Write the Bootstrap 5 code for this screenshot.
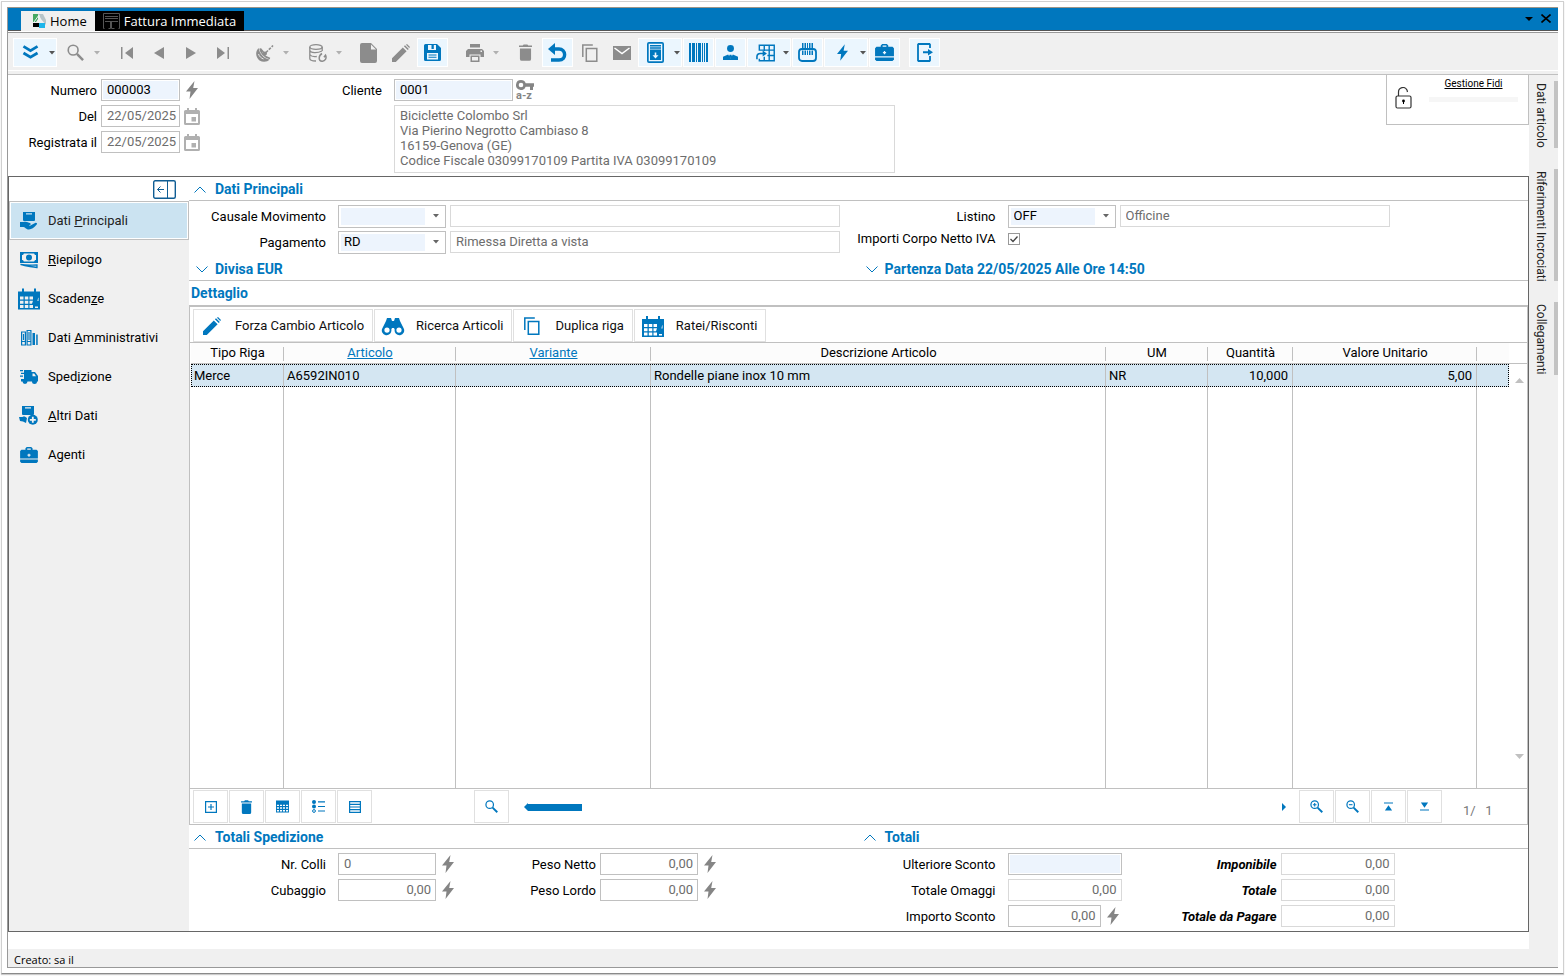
<!DOCTYPE html>
<html lang="it">
<head>
<meta charset="utf-8">
<meta name="viewport" content="width=device-width, initial-scale=1">
<title>Fattura Immediata</title>
<link href="https://cdn.jsdelivr.net/npm/bootstrap@5.3.0/dist/css/bootstrap.min.css" rel="stylesheet">
<style>
:root{--blue:#0077be;--line:#c0c0c0;--soft:#d9d9d9;--face:#f0f0f0;--fill:#edf4fd;--mute:#6d6d6d;--icon:#8c8c8c}
body{font:13px/15px Roboto,"Liberation Sans",sans-serif;color:#000;background:#fff}
button{font:inherit;color:inherit;background:none;border:0;padding:0}
svg{display:block;flex:none;fill:currentColor}
.ln{fill:none;stroke:currentColor}
.shell{margin:1px 1px 2px;border:1px solid #d0d0d0;border-bottom-color:#8a8a8a;padding:5px;box-shadow:0 1px 1px #ccc}
.win{border-left:1px solid #999;border-bottom:1px solid #999}
/* title bar */
.titlebar{height:24px;background:var(--blue);border-top:1px solid #9c9588;border-bottom:1px solid #555;padding:3px 7px 0 13px;font:13px/19px "Open Sans","Noto Sans",sans-serif}
.doc-tab{height:20px;padding:0 8px;background:var(--face);color:#000}
.doc-tab.on{background:#000;color:#fff}
/* toolbar */
.toolstrip{background:var(--face);border-top:1px solid #999;margin-top:1px;height:43px;padding:5px 5px 0;gap:1px;border-bottom:1px solid var(--line);box-shadow:inset 0 -3px var(--face),inset 0 -4px #fff}
.tb{width:31px;height:29px;border:1px solid transparent;display:flex;align-items:center;justify-content:center;color:var(--icon)}
.tb.dd{width:44px;justify-content:space-between;padding:0 1px 0 8px}
.tb.live{background:#ebf6fe;border-color:#fff;color:var(--blue)}
.tb.live .caret{color:#555}
.caret{color:#b0b0b0}
.gapl{margin-left:8px}
/* fields */
.fld{height:22px;border:1px solid var(--line);border-radius:0;padding:0 0 1px 5px;font:inherit;line-height:15px;color:var(--mute);background:#fff;min-width:0}
.fld.pale{border-color:var(--soft)}
.fld.ed{background:var(--fill);box-shadow:inset 0 0 0 1px #fff;color:#000}
.fld.num{text-align:right;padding-right:4px}
.combo{width:108px;height:23px;appearance:none;color:#000;
 background:url("data:image/svg+xml,%3Csvg xmlns='http://www.w3.org/2000/svg' width='6' height='4'%3E%3Cpath d='M0 0h6L3 3.500z' fill='%23666'/%3E%3C/svg%3E") right 6px center no-repeat,linear-gradient(var(--fill),var(--fill)) 2px 2px/calc(100% - 22px) calc(100% - 4px) no-repeat,#fff}
.rowf{display:flex;align-items:center;height:22px}
.stack{display:flex;flex-direction:column;gap:4px}
.lb{text-align:right;flex:none;white-space:nowrap}
.w-date{width:79px}.w-cod{width:119px}.w-qty{width:98px}.w-tot{width:114px}.w-sco{width:93px}
.la{width:89px;margin-right:4px}
.lm{width:137px;margin-right:12px}
.ls{width:140px;margin-right:4px}
.w-desc{width:390px}.w-lis{width:270px}
.bolt{color:#858585}
.addr{width:501px;height:68px;border:1px solid var(--soft);padding:2px 5px;color:var(--mute);resize:none;font:inherit;overflow:hidden;display:block}
.head-form{height:101px;padding-top:4px}
.fidi{width:143px;height:51px;border:1px solid var(--line);margin-top:-5px;padding:0 10px 0 8px}
.fidi a{font-size:10px;line-height:12px;color:#000}
.fidi .meter{height:5px;width:89px;background:#f6f6f6;margin-top:7px}
/* main panel */
.panel{border:1px solid #666;min-height:0}
.sidebar{width:180px;background:var(--face);flex:none}
.side-top{height:24px;background:#fff;padding-right:13px}
.side-link{display:flex;align-items:center;height:39px;padding:0 0 0 8px;color:#000;text-decoration:none;border:1px solid transparent;gap:8px}
.side-link svg{color:var(--blue);width:22px;height:22px}
.side-link.on{background:#cbe3f1;border-color:var(--line);box-shadow:inset 0 0 0 1px #fff;color:#222}
.sec{height:24px;border-bottom:1px solid var(--line);font-weight:700;font-size:14px;color:var(--blue);display:flex;align-items:center;gap:9px;padding:1px 0 0 5px}
.sec.low{padding-left:7px;gap:7px}
.sec.plain{padding-left:2px;height:26px;border-bottom-width:2px}
.half{width:50%}
.ckb{appearance:none;width:12px;height:12px;border:1px solid #999;margin:0 0 0 12px;background:#fff url("data:image/svg+xml,%3Csvg xmlns='http://www.w3.org/2000/svg' viewBox='0 0 10 10'%3E%3Cpath d='M1.500 5l2.500 2.500 4.500-5' fill='none' stroke='%23444' stroke-width='1.300'/%3E%3C/svg%3E")}
.detail{border-left:1px solid var(--line);border-right:1px solid var(--line);min-height:0}
.acts{height:36px;padding:2px 3px 0;gap:1px;border-bottom:1px solid var(--line)}
.act{height:33px;border:1px solid #e0e0e0;display:flex;align-items:center;padding:0 8px 0 6px;color:#111}
.act svg{color:var(--blue);width:24px;height:24px;margin-right:11px}
.grd{table-layout:fixed;width:100%;height:100%;border-collapse:separate;border-spacing:0}
.grd th{height:21px;font-weight:400;text-align:center;padding:0 0 2px;border-bottom:1px solid var(--line);background:linear-gradient(var(--line),var(--line)) right 4px/1px 14px no-repeat,#fcfcfc}
.grd th:last-child{background:#fcfcfc}
.grd a,.lnk{color:var(--blue)}
.grd td{padding:0 4px 0 3px;border-right:1px solid var(--line);white-space:nowrap}
.grd td:last-child{border-right:0}
.grd .sel td{height:23px;background:#d4e6f2}
.grd .sel{outline:1px dotted #000;outline-offset:-1px}
.grd .end{text-align:right}
.vscroll{width:18px;flex:none;color:#c0c0c0;padding:35px 3px 29px 0;background:linear-gradient(var(--line),var(--line)) 0 20px/100% 1px no-repeat}
.foot{height:37px;border-top:1px solid var(--line);border-bottom:1px solid var(--line);padding:1px 0 0 3px;gap:1px}
.fb{width:35px;height:33px;border:1px solid #e0e0e0;display:flex;align-items:center;justify-content:center;color:var(--blue)}
.fb.find{margin-left:101px}
.slide{padding:0 12px 0 14px}
.thumb{width:54px;height:7px;background:var(--blue)}
.pager{color:#777;width:84px;flex:none;padding:7px 0 0 20px;white-space:pre}
.totals{height:82px;padding-top:4px}
.tot{font-weight:700;font-style:italic}
.tot .lb{width:136px}
/* right rail */
.rail{width:29px;background:var(--face);padding-top:6px;gap:21px;flex:none}
.rtab{writing-mode:vertical-rl;font-size:12px;line-height:15px;color:#222;border-right:4px solid #c3c3c3;padding:2px 6px 0 0;width:25px;text-align:left;margin-left:4px;white-space:nowrap}
.base{height:17px;background:#fff}
.status{height:18px;background:var(--face);font:11px/21px "Open Sans","Noto Sans",sans-serif;padding-left:6px}
</style>
</head>
<body class="vh-100 d-flex flex-column overflow-hidden">
<svg width="0" height="0" class="position-absolute" aria-hidden="true">
<symbol id="bolt" viewBox="0 0 12 18"><path d="M8.500 0 0 10.500h4.500L3.500 18 12 7H7.200z"/></symbol>
<symbol id="caret" viewBox="0 0 6 4"><path d="M0 0h6L3 3.500z"/></symbol>
<symbol id="lens" viewBox="0 0 18 18"><circle class="ln" cx="6.500" cy="6.500" r="5.200" stroke-width="1.700"/><path class="ln" d="m10.500 10.500 6.500 6.500" stroke-width="2.600"/></symbol>
<symbol id="pencil" viewBox="0 0 18 18"><path d="M0 18v-3.800L10.800 3.400l3.800 3.800L3.800 18zM11.900 2.300l1.100-1.100 3.800 3.800-1.100 1.100zM14 .8 15 0l3 3-.8 1z"/></symbol>
<symbol id="bin" viewBox="0 0 14 18"><path d="M0 1.500h4L5 .3h4l1 1.200h4v1.700H0zM1 4.600h12V16a2 2 0 0 1-2 2H3a2 2 0 0 1-2-2z"/></symbol>
<symbol id="copy" viewBox="0 0 18 18"><path class="ln" d="M1.800 13V1h10M5.300 4.500h10.500v12.700H5.300z" stroke-width="1.500"/></symbol>
<symbol id="cal" viewBox="0 0 16 17"><path fill-rule="evenodd" d="M3 0h2v2h6V0h2v2h1.500A1.500 1.500 0 0 1 16 3.500v12a1.500 1.500 0 0 1-1.500 1.500h-13A1.500 1.500 0 0 1 0 15.500v-12A1.500 1.500 0 0 1 1.500 2H3zM2 6v9h12V6zM7.500 9h4.500v4.500H7.500z"/></symbol>
<symbol id="case" viewBox="0 0 20 18"><path fill-rule="evenodd" d="M6 3V1.500L7.500 0h5L14 1.500V3h4.500L20 4.500V13H0V4.500L1.500 3zM8 3h4V1.600H8zM9.300 7.500v1H8.300v1.400h1v1h1.400v-1h1V8.500h-1v-1z"/><path d="M0 14.200h20v2.300L18.500 18h-17L0 16.500z"/></symbol>
<symbol id="calgrid" viewBox="0 0 22 21"><path fill-rule="evenodd" d="M4 0h2v3h10V0h2v3h4v18H0V3h4zM2 8v3h3.500V8zm4.800 0v3h3.500V8zm4.700 0v3H15V8zM2 12.300v3h3.500v-3zm4.800 0v3h3.500v-3zm4.700 0v3h2.500l1-3zM2 16.500v3h3.500v-3zm4.800 0v3h3.500v-3zm4.700 0v3H15v-3zM20.200 9l-.8 3.500h1.100v-3zM17 18v1.500h3V18z"/></symbol>
<symbol id="up" viewBox="0 0 12 7"><path class="ln" d="M.5 6.500 6 1l5.500 5.500"/></symbol>
<symbol id="down" viewBox="0 0 12 7"><path class="ln" d="M.5.5 6 6 11.500.5"/></symbol>
<symbol id="pack" viewBox="0 0 12 9"><path fill-rule="evenodd" d="M0 0h12v8q0 1-1 1H1Q0 9 0 8zM3 1.200v1.200h6V1.200z"/></symbol>
</svg>

<div class="shell flex-grow-1 d-flex flex-column">
<div class="win flex-grow-1 d-flex flex-column">
 <header class="titlebar d-flex align-items-start">
  <button class="doc-tab d-flex align-items-center gap-1"><svg class="ms-1" width="13" height="15" viewBox="0 0 13 15"><path d="M0 0h5v5l-2 3H0z" fill="#46a862"/><path d="M5 0h5l3 6v5L8 5z" fill="#b8c4c8"/><path d="M0 9h6v4H0z" fill="#000"/><path d="M6 9h6v5H6z" fill="#1fb5ea"/><path d="m1 8 5-7 2 8" fill="none" stroke="#eef4f4"/></svg>Home</button>
  <button class="doc-tab on d-flex align-items-center gap-1"><svg width="17" height="16" viewBox="0 0 17 16"><path fill="none" stroke="#555" d="M1.500 15.500h-1V.5h16v15h-1M2 3.500h13M2 5.500h13M2 8.500h13M7.500 9v6.500h-2m3-6.500v6.500h3"/></svg>Fattura Immediata</button>
  <div class="ms-auto d-flex align-items-center h-100 gap-2 pb-1">
   <button aria-label="Elenco schede"><svg width="8" height="4" viewBox="0 0 8 4"><path d="M0 0h8L4 4z"/></svg></button>
   <button aria-label="Chiudi"><svg width="10" height="9" viewBox="0 0 10 9"><path class="ln" d="m.5.5 9 8m0-8-9 8" stroke-width="1.600"/></svg></button>
  </div>
 </header>

 <div class="toolstrip d-flex" role="toolbar">
  <button class="tb dd live" aria-label="Menu"><svg width="17" height="15" viewBox="0 0 18 16"><path class="ln" d="m1.500 1.500 7.500 4.500 7.500-4.500m-15 7 7.500 4.500 7.500-4.500" stroke-width="3"/></svg><svg class="caret" width="6" height="4"><use href="#caret"/></svg></button>
  <button class="tb dd" aria-label="Cerca"><svg width="17" height="17"><use href="#lens"/></svg><svg class="caret" width="6" height="4"><use href="#caret"/></svg></button>
  <button class="tb gapl" aria-label="Primo"><svg width="12" height="12" viewBox="0 0 12 12"><path d="M0 0h1.500v12H0zM12 0v12L4 6z"/></svg></button>
  <button class="tb" aria-label="Precedente"><svg width="10" height="12" viewBox="0 0 10 12"><path d="M10 0v12L0 6z"/></svg></button>
  <button class="tb" aria-label="Successivo"><svg width="10" height="12" viewBox="0 0 10 12"><path d="M0 0v12l10-6z"/></svg></button>
  <button class="tb" aria-label="Ultimo"><svg width="12" height="12" viewBox="0 0 12 12"><path d="M10.500 0H12v12h-1.500zM0 0v12l8-6z"/></svg></button>
  <button class="tb dd gapl" aria-label="Filtri"><svg width="18" height="18" viewBox="0 0 18 18"><path d="M2.500 4C-1 8-.5 13 3.500 16.500c3.500 2 8 1.500 10-1C8 14.500 4 10.500 2.500 4z"/><path d="M4 4.500c1 5 4.500 8.500 10 10M4.500 4.800l4.500 5.200" class="ln" stroke-width="1.600"/><circle cx="9" cy="9.500" r="2"/><path class="ln" d="m10 8.500 7-7" stroke-width="1.600" stroke-dasharray="2.800 1.200"/><path class="ln" d="M2.500 10c.8 2.500 2.500 4 5 5" stroke-width=".9" style="stroke:#f0f0f0"/></svg><svg class="caret" width="6" height="4"><use href="#caret"/></svg></button>
  <button class="tb dd gapl" aria-label="Archivio dati"><svg width="18" height="18" viewBox="0 0 18 18"><g class="ln" stroke-width="1.300"><ellipse cx="7" cy="3" rx="6.200" ry="2.300"/><path d="M.8 3v11.500c0 1.500 3 2.500 6.200 2.500M13.200 3v4M.8 6.500C1.500 9 8 9.500 13 7M.8 10.500c1 1.500 4 2.500 7 2"/><path d="M13 9.500c-4 2.500-3.500 7.500 0 7.700 3 .3 5-3 3.500-6l-1.500 2" stroke-width="1.500"/></g></svg><svg class="caret" width="6" height="4"><use href="#caret"/></svg></button>
  <button class="tb gapl" aria-label="Nuovo"><svg width="17" height="20" viewBox="0 0 17 20"><path fill-rule="evenodd" d="M2 0h9l6 6v12a2 2 0 0 1-2 2H2a2 2 0 0 1-2-2V2a2 2 0 0 1 2-2zm9 1.500v5h5z"/></svg></button>
  <button class="tb" aria-label="Modifica"><svg width="18" height="18"><use href="#pencil"/></svg></button>
  <button class="tb live" aria-label="Salva"><svg width="17" height="17" viewBox="0 0 17 17"><path fill-rule="evenodd" d="M1.500 0H13l4 4v11.500a1.500 1.500 0 0 1-1.500 1.500h-14A1.500 1.500 0 0 1 0 15.500v-14A1.500 1.500 0 0 1 1.500 0zM4 1v5h8V1H9.800v4H7.500V1zM3 9v6.500h11V9zm1.500 1.500h8v1h-8zm0 2.200h8v1h-8z"/></svg></button>
  <button class="tb dd gapl" aria-label="Stampa"><svg width="18" height="18" viewBox="0 0 18 18"><path fill-rule="evenodd" d="M4 0h10v3.500H4zM2 5h14l2 2v6h-3.500v-2.500h-11V13H0V7zm12.500 1.500v1.500H16V6.500zM4.500 11.500h9V18h-9zM6 13v3.500h6V13z"/></svg><svg class="caret" width="6" height="4"><use href="#caret"/></svg></button>
  <button class="tb gapl" aria-label="Elimina"><svg width="13" height="17"><use href="#bin"/></svg></button>
  <button class="tb live" aria-label="Annulla"><svg width="19" height="19" viewBox="0 0 19 19"><path d="M0 6 7 0v12z"/><path class="ln" d="M5 6h6c7 0 8 11 0 11H3" stroke-width="3.400"/></svg></button>
  <button class="tb" aria-label="Copia"><svg width="18" height="18"><use href="#copy"/></svg></button>
  <button class="tb" aria-label="Posta"><svg width="18" height="14" viewBox="0 0 18 14"><path d="M0 0h18v14H0z"/><path d="m1.500 2 7.500 5.500L16.500 2" fill="none" stroke="#fff" stroke-width="1.500"/></svg></button>
  <button class="tb dd live" aria-label="Schede"><svg width="17" height="21" viewBox="0 0 17 21"><path fill-rule="evenodd" d="M2 0h13q2 0 2 2v17q0 2-2 2H2q-2 0-2-2V2q0-2 2-2zM1.700 1.700v17.600h13.600V1.700z"/><path fill-rule="evenodd" d="M3 3h11v1.500H3zm0 2.300h11v1.500H3zm0 2.300h11V18H3zm4.700 3v2.600H5.500l3 3.300 3-3.300H9.300v-2.600z"/></svg><svg class="caret" width="6" height="4"><use href="#caret"/></svg></button>
  <button class="tb live" aria-label="Codice a barre"><svg width="19" height="19" viewBox="0 0 19 19"><path d="M0 0h2v19H0zm3 0h3v19H3zm4 0h1v19H7zm2 0h3v19H9zm4 0h1v19h-1zm2 0h1v19h-1zm2 0h2v19h-2z"/></svg></button>
  <button class="tb live" aria-label="Cliente"><svg width="15" height="15" viewBox="0 0 16 16"><circle cx="8" cy="3.700" r="3.700"/><path d="M0 16v-3.500L5.500 10 8 14.500l2.500-4.500 5.500 2.500V16zM7 10.500h2l.5 1.500L8 14l-1.500-2z"/></svg></button>
  <button class="tb dd live" aria-label="Griglia"><svg width="19" height="18" viewBox="0 0 20 18"><path class="ln" d="M3.500 6.500V.8h15.700v16.400H3.500V15M8.700 1v6M13.900 1v16.200M3.500 6h15.700M12 11.600h7M8.700 13v4" stroke-width="1.500"/><path class="ln" d="M1 15.500V13q0-3.500 3.500-3.500H8" stroke-width="1.700"/><path d="m7 6.300 4.500 3.200L7 12.700z"/></svg><svg class="caret" width="6" height="4"><use href="#caret"/></svg></button>
  <button class="tb live" aria-label="Etichette"><svg width="19" height="19" viewBox="0 0 19 19"><path d="M4 0h1.500v5H4zm2.500 0H8v5H6.500zM9 0h1v5H9zm2 0h1.500v5H11zm2.500 0H15v5h-1.500z"/><rect class="ln" x="1" y="6" width="17" height="12" rx="3" stroke-width="1.800"/><path d="M4 7.500h1.500V12H4zm2.500 0H8V12H6.500zm2.500 0h1V12H9zm2 0h1.500V12H11zm2.500 0H15V12h-1.500z"/></svg></button>
  <button class="tb dd live" aria-label="Azioni rapide"><svg class="ms-1" width="11" height="17"><use href="#bolt"/></svg><svg class="caret" width="6" height="4"><use href="#caret"/></svg></button>
  <button class="tb live" aria-label="Agenti"><svg width="19" height="17" viewBox="0 0 20 18"><use href="#case" width="20" height="18"/></svg></button>
  <button class="tb live gapl" aria-label="Esci"><svg width="16" height="19" viewBox="0 0 16 19"><path class="ln" d="M13 5V1.500L12.500 1h-11L1 1.500v16l.5.500h11l.5-.5V13" stroke-width="1.800"/><path d="M6 8.300h5V6l5 3.300-5 3.300v-2.300H6z"/></svg></button>
 </div>

 <div class="flex-grow-1 d-flex" style="min-height:0">
  <main class="flex-grow-1 d-flex flex-column" style="min-width:0">
   <div class="head-form d-flex">
    <div class="stack">
     <div class="rowf"><label class="lb la" for="num">Numero</label><input id="num" class="fld ed w-date" value="000003"><svg class="bolt ms-1" width="16" height="18"><use href="#bolt"/></svg></div>
     <div class="rowf"><label class="lb la" for="del">Del</label><input id="del" class="fld w-date" value="22/05/2025"><svg class="ms-1 caret" width="16" height="17"><use href="#cal"/></svg></div>
     <div class="rowf"><label class="lb la" for="reg">Registrata il</label><input id="reg" class="fld w-date" value="22/05/2025"><svg class="ms-1 caret" width="16" height="17"><use href="#cal"/></svg></div>
    </div>
    <div class="d-flex" style="margin-left:130px">
     <label for="cli" class="lb pt-1" style="width:52px;margin-right:12px">Cliente</label>
     <div class="stack">
      <div class="rowf"><input id="cli" class="fld ed w-cod" value="0001"><span class="bolt" style="margin-left:3px"><svg width="19" height="10" viewBox="0 0 19 10"><path fill-rule="evenodd" d="M5 0a5 5 0 0 1 4.700 3.300H18v3.400h-1V10h-3V6.700H9.700A5 5 0 1 1 5 0zm0 2.700a2.300 2.300 0 1 0 0 4.600 2.300 2.300 0 0 0 0-4.600z"/></svg><b class="d-block lh-1" style="font-size:11px">a-z</b></span></div>
      <textarea class="addr" aria-label="Indirizzo cliente" readonly>Biciclette Colombo Srl
Via Pierino Negrotto Cambiaso 8
16159-Genova (GE)
Codice Fiscale 03099170109 Partita IVA 03099170109</textarea>
     </div>
    </div>
    <div class="fidi ms-auto d-flex justify-content-between">
     <svg width="17" height="22" viewBox="0 0 17 22" class="align-self-center mb-1"><path fill="none" stroke="#333" d="M3.500 8.500V5a4.500 4.500 0 0 1 8.500-2l.5 2M2.500 9h12q1.500 0 1.500 1.500v9q0 1.500-1.500 1.500h-12Q1 21 1 19.500v-9Q1 9 2.500 9z" stroke-width="1.200"/><circle cx="8.500" cy="14" r="1.400"/><path d="M8 14h1v3H8z"/></svg>
     <div class="text-center"><a href="#">Gestione Fidi</a><div class="meter"></div></div>
    </div>
   </div>

   <section class="panel flex-grow-1 d-flex">
    <nav class="sidebar">
     <div class="side-top d-flex align-items-center justify-content-end"><button aria-label="Comprimi"><svg width="23" height="19" viewBox="0 0 23 19"><rect x=".7" y=".7" width="21.600" height="17.600" rx="1.500" fill="none" stroke="#0f5d94" stroke-width="1.400"/><path d="M14.500 1v17M11 9.500H4.500m3-3-3 3 3 3" fill="none" stroke="#0f5d94"/></svg></button></div>
     <a class="side-link on" href="#"><svg viewBox="0 0 22 22"><use href="#pack" x="5" y="2" width="12" height="9"/><path d="M2 12h3.500c3-1 4.500.5 6.500 1l1 1.200-2 1 1 .6 5.500-3c1.800 0 2 1 1 2-2.500 2.800-5 4.700-7.500 4.700-3 0-3.500-2-5.500-2.500H2z"/></svg><span>Dati <u>P</u>rincipali</span></a>
     <a class="side-link" href="#"><svg viewBox="0 0 22 22"><path fill-rule="evenodd" d="M2 3h18v11H2zm2 3v5c1 0 1.500.5 1.800 1.500h10.400c.3-1 .8-1.500 1.800-1.500V6c-1 0-1.500-.5-1.800-1.500H5.800C5.500 5.500 5 6 4 6zm7-.5a3 3 0 1 1 0 6 3 3 0 0 1 0-6z"/><path class="ln" d="M2.500 15.500c7 1 10 .5 16.500.5v2.500c-7-1.500-10-.5-16.500-3z" stroke-width="1.300"/></svg><span><u>R</u>iepilogo</span></a>
     <a class="side-link" href="#"><svg><use href="#calgrid"/></svg><span>Scaden<u>z</u>e</span></a>
     <a class="side-link" href="#"><svg viewBox="0 0 22 22"><path class="ln" d="M3.600 5h3.800v13H3.600zm5.500-1.500h3.800V18H9.100zM5.500 7v6m5.500-8v8M3.600 14.500h3.800m1.700 0h3.800" stroke-width="1.200"/><path d="M14.500 6H17v12h-2.500zm3.700 1.500h1.500V18h-1.500z"/></svg><span>Dati <u>A</u>mministrativi</span></a>
     <a class="side-link" href="#"><svg viewBox="0 0 22 22"><path fill-rule="evenodd" d="M6 4h7.500v2H17l3 4v5.500h-1a2.500 2.500 0 0 1-5 0H9.500a2.500 2.500 0 0 1-5 0H3V13h3zm8.500 3.500v2.700h3.500l-1.800-2.700z"/><path d="M2 4h3v1.300H2zm1 2.700h3V8H3zM2 9.500h3v1.300H2z"/></svg><span>Sped<u>i</u>zione</span></a>
     <a class="side-link" href="#"><svg viewBox="0 0 22 22"><use href="#pack" x="4" y="1" width="12" height="9"/><path d="M1 12h3.500c2-1 3 0 4.500 1l-1 5-3-1.500-3-.5z"/><circle cx="14.800" cy="14.800" r="5"/><path d="M14.800 11.800v6m-3-3h6" stroke="#f0f0f0" stroke-width="1.800"/></svg><span><u>A</u>ltri Dati</span></a>
     <a class="side-link" href="#"><svg viewBox="0 0 22 22"><use href="#case" x="2" y="3" width="18" height="16"/></svg><span>A<u>g</u>enti</span></a>
    </nav>

    <div class="flex-grow-1 d-flex flex-column" style="min-width:0">
     <div class="sec"><svg width="12" height="7"><use href="#up"/></svg>Dati Principali</div>
     <div class="d-flex pt-1">
      <div class="half stack">
       <div class="rowf"><label class="lb lm" for="cau">Causale Movimento</label><select id="cau" class="fld combo"><option></option></select><input class="fld pale ms-1 w-desc" aria-label="Descrizione causale"></div>
       <div class="rowf"><label class="lb lm" for="pag">Pagamento</label><select id="pag" class="fld combo"><option>RD</option></select><input class="fld pale ms-1 w-desc" value="Rimessa Diretta a vista" aria-label="Descrizione pagamento"></div>
      </div>
      <div class="half stack">
       <div class="rowf"><label class="lb lm" for="lis">Listino</label><select id="lis" class="fld combo"><option>OFF</option></select><input class="fld pale ms-1 w-lis" value="Officine" aria-label="Descrizione listino"></div>
       <div class="d-flex align-items-center"><label class="lb d-flex justify-content-end" style="width:137px" for="ivn">Importi Corpo Netto IVA</label><input id="ivn" class="ckb" type="checkbox" checked></div>
      </div>
     </div>
     <div class="d-flex pt-1">
      <div class="half sec low"><svg width="12" height="7"><use href="#down"/></svg>Divisa EUR</div>
      <div class="half sec low"><svg width="12" height="7"><use href="#down"/></svg>Partenza Data 22/05/2025 Alle Ore 14:50</div>
     </div>
     <div class="sec plain">Dettaglio</div>

     <div class="detail flex-grow-1 d-flex flex-column">
      <div class="acts d-flex">
       <button class="act"><svg viewBox="-3 -3 24 24"><use href="#pencil" width="18" height="18"/></svg>Forza Cambio Articolo</button>
       <button class="act"><svg viewBox="0 0 24 24"><path fill-rule="evenodd" d="M6 4h4l1 3h2l1-3h4l1 3 3.500 7a4.800 4.800 0 1 1-8.800 1.500l-.7-1.500h-2l-.7 1.500A4.800 4.800 0 1 1 1.500 14L5 7zM6 13.500a2.600 2.600 0 1 0 0 5.200 2.600 2.600 0 0 0 0-5.200zm12 0a2.600 2.600 0 1 0 0 5.200 2.600 2.600 0 0 0 0-5.200z"/></svg>Ricerca Articoli</button>
       <button class="act"><svg viewBox="-3 -3 24 24"><use href="#copy" width="18" height="18"/></svg>Duplica riga</button>
       <button class="act"><svg viewBox="0 0 24 24"><use href="#calgrid" x="1" y="2" width="22" height="21"/></svg>Ratei/Risconti</button>
      </div>
      <div class="flex-grow-1 d-flex" style="min-height:0;padding-left:1px">
       <div class="flex-grow-1">
       <table class="grd">
        <colgroup><col style="width:93px"><col style="width:172px"><col style="width:195px"><col><col style="width:102px"><col style="width:85px"><col style="width:184px"><col style="width:32px"></colgroup>
        <thead><tr><th>Tipo Riga</th><th><a href="#">Articolo</a></th><th><a href="#">Variante</a></th><th>Descrizione Articolo</th><th>UM</th><th>Quantità</th><th>Valore Unitario</th><th></th></tr></thead>
        <tbody>
         <tr class="sel"><td>Merce</td><td>A6592IN010</td><td></td><td>Rondelle piane inox 10 mm</td><td>NR</td><td class="end">10,000</td><td class="end">5,00</td><td></td></tr>
         <tr><td></td><td></td><td></td><td></td><td></td><td></td><td></td><td></td></tr>
        </tbody>
       </table>
       </div>
       <div class="vscroll d-flex flex-column justify-content-between align-items-end">
        <svg width="9" height="5" viewBox="0 0 9 5"><path d="M0 5h9L4.500 0z"/></svg>
        <svg width="9" height="5" viewBox="0 0 9 5"><path d="M0 0h9L4.500 5z"/></svg>
       </div>
      </div>
      <div class="foot d-flex">
       <button class="fb" aria-label="Aggiungi riga"><svg width="12" height="12" viewBox="0 0 12 12"><path class="ln" d="M.6.6h10.800v10.800H.6zM6 3v6M3 6h6" stroke-width="1.200"/></svg></button>
       <button class="fb" aria-label="Elimina riga"><svg width="11" height="14"><use href="#bin"/></svg></button>
       <button class="fb" aria-label="Griglia"><svg width="13" height="13" viewBox="0 0 14 13"><path fill-rule="evenodd" d="M0 0h14v13H0zM1 4.500V6h2.200V4.500zm3.300 0V6h2.200V4.500zm3.200 0V6h2.200V4.500zm3.300 0V6H13V4.500zM1 7.300V9h2.200V7.300zm3.300 0V9h2.200V7.300zm3.200 0V9h2.200V7.300zm3.300 0V9H13V7.300zM1 10.300V12h2.200v-1.700zm3.300 0V12h2.200v-1.700zm3.200 0V12h2.200v-1.700zm3.300 0V12H13v-1.700z"/></svg></button>
       <button class="fb" aria-label="Elenco"><svg width="13" height="13" viewBox="0 0 13 13"><circle cx="2" cy="2" r="2"/><circle cx="2" cy="6.500" r="2"/><circle class="ln" cx="2" cy="11" r="1.400"/><path d="M6 1.300h7v1.200H6zm0 4.600h7v1.200H6zm0 4.500h7v1.200H6z"/></svg></button>
       <button class="fb" aria-label="Righe"><svg width="12" height="12" viewBox="0 0 12 12"><path class="ln" d="M.6.6h10.800v10.800H.6zM1 3.300h10M1 6h10M1 8.700h10" stroke-width="1.200"/></svg></button>
       <button class="fb find" aria-label="Cerca riga"><svg width="13" height="13"><use href="#lens"/></svg></button>
       <div class="slide flex-grow-1 d-flex align-items-center justify-content-between">
        <div class="d-flex align-items-center lnk"><svg width="4" height="8" viewBox="0 0 4 8"><path d="M4 0v8L0 4z"/></svg><div class="thumb"></div></div>
        <svg class="lnk" width="4" height="8" viewBox="0 0 4 8"><path d="M0 0v8l4-4z"/></svg>
       </div>
       <button class="fb" aria-label="Ingrandisci"><svg width="13" height="13" viewBox="0 0 18 18"><use href="#lens"/><path class="ln" d="M6.500 4v5M4 6.500h5" stroke-width="1.500"/></svg></button>
       <button class="fb" aria-label="Riduci"><svg width="13" height="13" viewBox="0 0 18 18"><use href="#lens"/><path class="ln" d="M4 6.500h5" stroke-width="1.500"/></svg></button>
       <button class="fb" aria-label="Inizio"><svg width="9" height="9" viewBox="0 0 10 9"><path d="M0 0h10v1.300H0zm1 9h8L5 3z"/></svg></button>
       <button class="fb" aria-label="Fine"><svg width="9" height="9" viewBox="0 0 10 9"><path d="M0 7.700h10V9H0zM1 0h8L5 6z"/></svg></button>
       <div class="pager d-flex align-items-center">1/   1</div>
      </div>
     </div>

     <div class="d-flex">
      <div class="half">
       <div class="sec"><svg width="12" height="7"><use href="#up"/></svg>Totali Spedizione</div>
       <div class="totals stack">
        <div class="rowf"><label class="lb lm" for="col">Nr. Colli</label><input id="col" class="fld w-qty" value="0"><svg class="bolt ms-1" width="16" height="18"><use href="#bolt"/></svg><label class="lb ls" for="net">Peso Netto</label><input id="net" class="fld num w-qty" value="0,00"><svg class="bolt ms-1" width="16" height="18"><use href="#bolt"/></svg></div>
        <div class="rowf"><label class="lb lm" for="cub">Cubaggio</label><input id="cub" class="fld num w-qty" value="0,00"><svg class="bolt ms-1" width="16" height="18"><use href="#bolt"/></svg><label class="lb ls" for="lor">Peso Lordo</label><input id="lor" class="fld num w-qty" value="0,00"><svg class="bolt ms-1" width="16" height="18"><use href="#bolt"/></svg></div>
       </div>
      </div>
      <div class="half">
       <div class="sec"><svg width="12" height="7"><use href="#up"/></svg>Totali</div>
       <div class="totals d-flex">
        <div class="stack" style="width:282px">
         <div class="rowf"><label class="lb lm" for="ult">Ulteriore Sconto</label><input id="ult" class="fld ed w-tot"></div>
         <div class="rowf"><label class="lb lm" for="oma">Totale Omaggi</label><input id="oma" class="fld pale num w-tot" value="0,00"></div>
         <div class="rowf"><label class="lb lm" for="sco">Importo Sconto</label><input id="sco" class="fld num w-sco" value="0,00"><svg class="bolt ms-1" width="16" height="18"><use href="#bolt"/></svg></div>
        </div>
        <div class="stack tot">
         <div class="rowf"><label class="lb me-1" for="imp">Imponibile</label><input id="imp" class="fld pale num w-tot fw-normal fst-normal" value="0,00"></div>
         <div class="rowf"><label class="lb me-1" for="tot">Totale</label><input id="tot" class="fld pale num w-tot fw-normal fst-normal" value="0,00"></div>
         <div class="rowf"><label class="lb me-1" for="dap">Totale da Pagare</label><input id="dap" class="fld pale num w-tot fw-normal fst-normal" value="0,00"></div>
        </div>
       </div>
      </div>
     </div>
    </div>
   </section>
   <div class="base"></div>
  </main>
  <aside class="rail d-flex flex-column">
   <button class="rtab">Dati articolo</button>
   <button class="rtab">Riferimenti Incrociati</button>
   <button class="rtab">Collegamenti</button>
  </aside>
 </div>
 <footer class="status">Creato: sa il</footer>
</div>
</div>
<script src="https://cdn.jsdelivr.net/npm/bootstrap@5.3.0/dist/js/bootstrap.bundle.min.js"></script>
</body>
</html>
